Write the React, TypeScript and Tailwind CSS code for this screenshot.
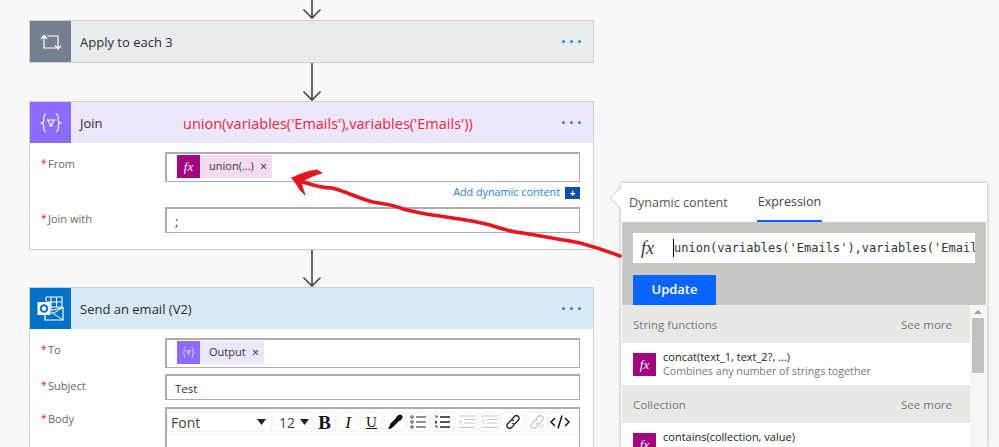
import { Fragment } from 'react';

const sans = "font-['Open_Sans',sans-serif]";

const Arrow = ({ h }: { h: number }) => (
  <svg width="24" height={h} viewBox={`0 0 24 ${h}`} className="block mx-auto" fill="none" stroke="#444" strokeWidth="1.6">
    <path d={`M12 0V${h - 1}M3.500 ${h - 9.5}L12 ${h - 1}L20.500 ${h - 9.5}`} />
  </svg>
);

const LoopIcon = () => (
  <svg width="22" height="16" viewBox="0 0 22 16" fill="none" stroke="#fff" strokeWidth="1.2">
    <path d="M1 5L4 1.500L7 5M4 2V14H16M15 11.500L18 15L21 11.500M18 14V2H7" />
  </svg>
);

const VarIcon = ({ size = 22 }: { size?: number }) => (
  <svg width={size} height={size} viewBox="0 0 22 22" fill="none" stroke="#fff" strokeWidth="1.1">
    <path d="M6 2C3 2 4 8 3.500 9.500C3.200 10.500 1.500 11 1.500 11C1.500 11 3.200 11.500 3.500 12.500C4 14 3 20 6 20" />
    <path d="M16 2C19 2 18 8 18.500 9.500C18.800 10.500 20.500 11 20.500 11C20.500 11 18.800 11.500 18.500 12.500C18 14 19 20 16 20" />
    <path d="M7.500 8H14.500L12 11.500V14H10V11.500Z" />
  </svg>
);

const OutlookIcon = () => (
  <svg width="27" height="25" viewBox="0 0 27 25" fill="none">
    <path d="M9 1H25V11M9 1V5M14 1V14M19.500 1V11M9 6H25M14 11H25" stroke="#fff" strokeWidth="1.100" />
    <rect x="0.500" y="6" width="13" height="13" fill="#fff" />
    <circle cx="7" cy="12.500" r="3.300" stroke="#0072c6" strokeWidth="2" />
    <path d="M14 14.500L26 11.500V24H8V19" stroke="#fff" strokeWidth="1.200" />
    <path d="M14 16L26 24M15 18L26 11.500" stroke="#fff" strokeWidth="1" />
  </svg>
);

const Fx = ({ className }: { className: string }) => (
  <span className={`italic font-['Liberation_Serif',serif] ${className}`}>fx</span>
);

const Dots = () => (
  <div className="ml-auto mr-[12px] flex gap-[5px]">
    <span className="size-[3px] rounded-full bg-[#2a80e0]" />
    <span className="size-[3px] rounded-full bg-[#2a80e0]" />
    <span className="size-[3px] rounded-full bg-[#2a80e0]" />
  </div>
);

const Header = ({ bg, iconBg, icon, title }: { bg: string; iconBg: string; icon: React.ReactNode; title: string }) => (
  <div className={`h-[41px] flex items-center ${bg}`}>
    <div className={`w-[41px] h-full flex items-center justify-center ${iconBg}`}>{icon}</div>
    <span className="ml-[9px] pt-[2px] text-[13px] text-[#2b2b2b]">{title}</span>
    <Dots />
  </div>
);

const Label = ({ text }: { text: string }) => (
  <div className="w-[135px] shrink-0 pl-[11px] pt-[4px] text-[11px] text-[#666] flex">
    <span className="text-[#e8141e] w-[7px] text-[10px]">*</span>
    {text}
  </div>
);

const Token = ({ bg, iconBg, icon, text }: { bg: string; iconBg: string; icon: React.ReactNode; text: string }) => (
  <div className={`h-[23px] flex items-center ${bg}`}>
    <div className={`w-[23px] h-full flex items-center justify-center ${iconBg}`}>{icon}</div>
    <span className="ml-[9px] text-[11px] text-[#333]">{text}</span>
    <span className="ml-[6px] mr-[5px] text-[13px] leading-none text-[#333]">×</span>
  </div>
);

const ToolButton = ({ children, w = 'w-[22px]' }: { children: React.ReactNode; w?: string }) => (
  <div className={`${w} h-[20px] shrink-0 flex items-center justify-center rounded-sm border border-[#f2f2f2]`}>{children}</div>
);

const ListIcon = ({ numbered }: { numbered?: boolean }) => (
  <svg width="16" height="14" viewBox="0 0 16 14" fill="none" stroke="#222">
    <path d="M6 2H16M6 7H16M6 12H16" strokeWidth={numbered ? 1.6 : 1} />
    {numbered ? (
      <path d="M1 1H3V3M1 6.500H3L1 8H3M1 11H3V13" strokeWidth="0.9" />
    ) : (
      <Fragment>
        <circle cx="2" cy="2" r="1.300" strokeWidth="0.8" />
        <circle cx="2" cy="7" r="1.300" strokeWidth="0.8" />
        <circle cx="2" cy="12" r="1.300" strokeWidth="0.8" />
      </Fragment>
    )}
  </svg>
);

const IndentIcon = ({ left }: { left?: boolean }) => (
  <svg width="17" height="14" viewBox="0 0 17 14" fill="none" stroke="#c4c4c4" strokeWidth="1">
    <path d="M1 1H17M6 4.500H17M6 8H17M1 12.500H17" />
    <path d={left ? 'M3.500 4.500L1 6.500L3.500 8.500' : 'M1 4.500L3.500 6.500L1 8.500'} />
  </svg>
);

const LinkIcon = ({ broken }: { broken?: boolean }) => (
  <svg width="16" height="16" viewBox="0 0 16 16" fill="none" stroke={broken ? '#c8c8c8' : '#222'} strokeWidth="1.300">
    <path d="M6.500 5.500L9.500 2.500C10.500 1.500 12 1.200 13.300 2.500C14.600 3.800 14.300 5.300 13.300 6.300L10.500 9.200C9.500 10.200 8 10.200 7.200 9.200" />
    <path d="M9.500 10.500L6.500 13.500C5.500 14.500 4 14.800 2.700 13.500C1.400 12.200 1.700 10.700 2.700 9.700L5.500 6.800C6.500 5.800 8 5.800 8.800 6.800" />
    {broken && <path d="M10 11L14 15M12 10L15 12" strokeWidth="1" />}
  </svg>
);

const Toolbar = () => (
  <div className="h-[26px] flex items-center pt-[1px] gap-[1px] border-b border-[#eee]">
    <div className="w-[105px] h-[20px] flex items-center pl-[3px] pr-[5px] text-[14px] text-[#444] shrink-0 border border-[#f2f2f2]">
      Font
      <svg width="9" height="6" viewBox="0 0 9 6" className="ml-auto"><path d="M0 0H9L4.500 6Z" fill="#222" /></svg>
    </div>
    <div className="w-[39px] h-[20px] flex items-center pl-[5px] pr-[2px] text-[14px] text-[#444] shrink-0 border border-[#f2f2f2]">
      12
      <svg width="9" height="6" viewBox="0 0 9 6" className="ml-auto"><path d="M0 0H9L4.500 6Z" fill="#222" /></svg>
    </div>
    <ToolButton w="w-[23px]"><span className="font-['Liberation_Serif',serif] font-bold text-[19px] leading-none text-[#111]">B</span></ToolButton>
    <ToolButton><span className="font-['Liberation_Serif',serif] italic text-[17px] leading-none text-[#111]">I</span></ToolButton>
    <ToolButton w="w-[23px]"><span className="font-['Liberation_Serif',serif] underline text-[15px] leading-none text-[#111]">U</span></ToolButton>
    <ToolButton>
      <svg width="16" height="16" viewBox="0 0 16 16" fill="#111">
        <path d="M10 3L13 6L6 13C5 14 3 15 2 15C1 15 1 14 2 13C3 11.500 3 10 4 9Z" />
        <path d="M9 3L11.500 1C12.500 0 14 0.500 15 1.500C15.800 2.500 16 3.500 15 4.500L13 7Z" />
      </svg>
    </ToolButton>
    <ToolButton><ListIcon /></ToolButton>
    <ToolButton w="w-[24px]"><ListIcon numbered /></ToolButton>
    <ToolButton><IndentIcon /></ToolButton>
    <ToolButton><IndentIcon left /></ToolButton>
    <ToolButton w="w-[24px]"><LinkIcon /></ToolButton>
    <ToolButton><LinkIcon broken /></ToolButton>
    <ToolButton>
      <svg width="20" height="14" viewBox="0 0 20 14" fill="none" stroke="#111" strokeWidth="1.500">
        <path d="M5 3L1 7L5 11M15 3L19 7L15 11M12 0.500L8 13.500" />
      </svg>
    </ToolButton>
  </div>
);

const FlowColumn = () => (
  <div className="w-[594px] shrink-0 pl-[29px]">
    <Arrow h={19} />
    <div className="mt-px border border-[#cfcfcf]">
      <Header bg="bg-[#eaedf0]" iconBg="bg-[#74808f]" title="Apply to each 3" icon={<LoopIcon />} />
    </div>
    <Arrow h={38} />
    <div className="border border-[#cfcfcf] bg-white">
      <div className="relative">
        <Header bg="bg-[#ede7fd]" iconBg="bg-[#8c6cff]" title="Join" icon={<VarIcon />} />
        <span className="absolute left-[153px] top-[11px] text-[14.500px] text-[#f0243c]">union(variables('Emails'),variables('Emails'))</span>
      </div>
      <div className="h-[106px] pr-[13px] pt-[9px]">
        <div className="flex">
          <Label text="From" />
          <div className="flex-1 h-[30px] border-2 border-[#adadad] border-b-[1px] border-r-[1px] pl-[10px] pt-[1px] flex">
            <Token bg="bg-[#f4dcf0]" iconBg="bg-[#a2057e]" text="union(...)" icon={<Fx className="text-white text-[13px]" />} />
          </div>
        </div>
        <div className="h-[25px] flex items-center justify-end gap-[5px] pb-[4px] text-[10.800px] text-[#2a7fd6]">
          Add dynamic content
          <span className="w-[15px] h-[12px] flex items-center justify-center bg-[#0b4ea2] text-white text-[10px] font-bold leading-none">+</span>
        </div>
        <div className="flex">
          <Label text="Join with" />
          <div className="flex-1 h-[26px] border-2 border-[#adadad] border-b-[1px] border-r-[1px] pl-[8px] pt-[2px] text-[13px] text-[#444] flex items-center">;</div>
        </div>
      </div>
    </div>
    <Arrow h={37} />
    <div className="border border-[#cfcfcf] bg-white">
      <Header bg="bg-[#d8e9f8]" iconBg="bg-[#0072c6]" title="Send an email (V2)" icon={<OutlookIcon />} />
      <div className="pr-[13px] pt-[9px] flex flex-col gap-[6px]">
        <div className="flex">
          <Label text="To" />
          <div className="flex-1 h-[30px] border-2 border-[#adadad] border-b-[1px] border-r-[1px] pl-[10px] pt-[1px] flex">
            <Token bg="bg-[#ede7fd]" iconBg="bg-[#8c6cff]" text="Output" icon={<VarIcon size={13} />} />
          </div>
        </div>
        <div className="flex">
          <Label text="Subject" />
          <div className="flex-1 h-[26px] border-2 border-[#adadad] border-b-[1px] border-r-[1px] pl-[8px] pt-[2px] text-[11.500px] text-[#333] flex items-center">Test</div>
        </div>
        <div className="flex mt-px">
          <Label text="Body" />
          <div className="flex-1 h-[60px] border-2 border-b-0 border-[#adadad] border-r-[1px]">
            <Toolbar />
          </div>
        </div>
      </div>
    </div>
  </div>
);

const SectionHeader = ({ title }: { title: string }) => (
  <div className="h-[38px] bg-[#e8e9e7] flex items-center justify-between pl-[11px] pr-[18px] pt-[2px] text-[11.500px] text-[#777]">
    <span>{title}</span>
    <span>See more</span>
  </div>
);

const FunctionRow = ({ name, desc }: { name: string; desc: string }) => (
  <div className="h-[42px] bg-white flex pl-[11px] pt-[10px]">
    <div className="w-[23px] h-[23px] shrink-0 bg-[#a2057e] flex items-center justify-center">
      <Fx className="text-white text-[13px]" />
    </div>
    <div className="ml-[7px] -mt-[4px]">
      <div className="text-[11px] leading-[15px] text-[#222]">{name}</div>
      <div className="text-[10.700px] leading-[15px] text-[#777]">{desc}</div>
    </div>
  </div>
);

const Flyout = () => (
  <div className="relative w-[366px] h-[264px] mt-[183px] ml-[27px] shrink-0 bg-white shadow-[0_0_4px_rgba(0,0,0,0.3)]">
    <div className="absolute -left-[7px] top-[8px] size-[14px] rotate-45 bg-white shadow-[-1px_1px_2px_rgba(0,0,0,0.15)]" />
    <div className="relative h-[39px] flex pl-[8px] pt-[1px] text-[12.500px] items-stretch gap-[29px]">
      <div className="flex items-center text-[#555]">Dynamic content</div>
      <div className="flex items-center px-px text-[#444] border-b-2 border-[#0a64ff]">Expression</div>
    </div>
    <div className="relative mx-[1px] h-[83px] bg-[#c8c9c7] pt-[11px] pl-[11px] pr-[11px]">
      <div className="h-[30px] bg-white flex items-center overflow-hidden">
        <Fx className="w-[40px] shrink-0 pl-[8px] text-[#333] text-[18px]" />
        <span className="border-l border-black font-['DejaVu_Sans_Mono',monospace] text-[12px] whitespace-nowrap text-[#333]">union(variables('Emails'),variables('Emails'))</span>
      </div>
      <div className="mt-[12px] w-[83px] h-[30px] bg-[#0a64ff] text-white font-semibold text-[13px] flex items-center justify-center">Update</div>
    </div>
    <div className="mx-[1px] flex">
      <div className="w-[348px]">
        <SectionHeader title="String functions" />
        <FunctionRow name="concat(text_1, text_2?, ...)" desc="Combines any number of strings together" />
        <SectionHeader title="Collection" />
        <FunctionRow name="contains(collection, value)" desc="" />
      </div>
      <div className="flex-1 bg-[#f6f6f6] flex flex-col items-center pt-[5px]">
        <span className="w-0 h-0 border-x-[4px] border-x-transparent border-b-[4px] border-b-[#a0a0a0]" />
        <div className="mt-[4px] w-[12px] h-[55px] bg-[#c1c1c1]" />
      </div>
    </div>
  </div>
);

export default function App() {
  return (
    <div className={`relative w-[999px] h-[447px] overflow-hidden bg-[#f8f8f8] ${sans}`}>
      <div className="flex items-start">
        <FlowColumn />
        <Flyout />
      </div>
      {/* hand-drawn red annotation over the cards */}
      <svg width="999" height="447" className="absolute inset-0 pointer-events-none" fill="none" stroke="#e8141e" strokeLinecap="round" strokeLinejoin="round">
        <path strokeWidth="3.600" d="M303 182C312 185 322 188 332 188C345 191 360 199 373 202C385 204 395 205 403 209C415 212 430 215 440 216C458 219 475 221 490 225C502 229 512 232 523 233C545 237 565 240 580 243C595 247 607 251 620 256" />
        <path fill="#e8141e" strokeWidth="1" d="M292 178C300 174 308 171 317 170L322 173C314 175 308 178 303 181C300 183 303 188 305 195L300 190C298 186 295 182 292 178Z" />
      </svg>
    </div>
  );
}
